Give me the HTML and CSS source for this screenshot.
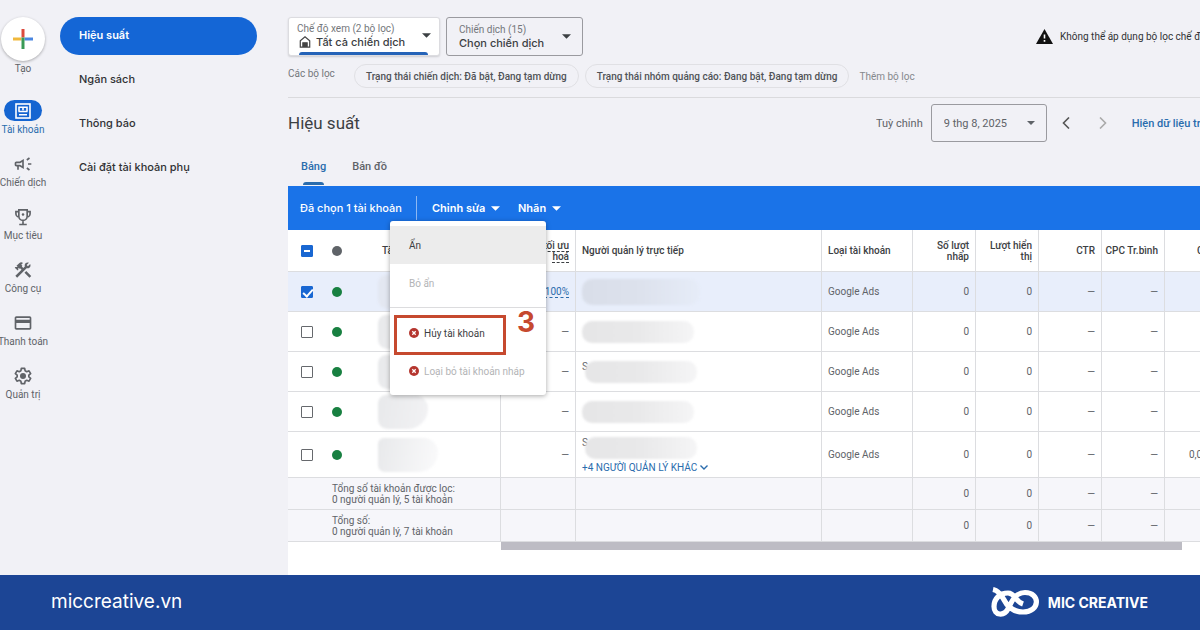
FILE: index.html
```html
<!DOCTYPE html>
<html lang="vi">
<head>
    <meta charset="UTF-8">
    <meta name="viewport" content="width=device-width, initial-scale=1.0">
    <title>Hiệu suất</title>
    <link rel="stylesheet" href="styles.css">
</head>
<body>

<div class="app">
    <nav class="rail">
        <button type="button" class="create">
            <span class="create-circle">
                <svg width="20" height="20" viewBox="0 0 20 20">
                    <path d="M8.500 0h3v8.500h-3z" fill="#dc4a3d"/>
                    <path d="M0 8.500h8.500v3H0z" fill="#f0b83c"/>
                    <path d="M11.500 8.500H20v3h-8.500z" fill="#4a86e0"/>
                    <path d="M8.500 8.500h3V20h-3z" fill="#3a9a56"/>
                </svg>
            </span>
            Tạo
        </button>
        <a href="#" class="rail-item active">
            <span class="rail-icon">
                <svg width="16" height="16" viewBox="0 0 16 16" fill="none" stroke="#fff" stroke-width="1.600">
                    <rect x="1" y="1" width="14" height="14"/>
                    <path d="M4 8.500V4.200h8v4.300M8 4.200v3M3.500 8.500h9M4 11.800h8"/>
                </svg>
            </span>
            Tài khoản
        </a>
        <a href="#" class="rail-item">
            <span class="rail-icon">
                <svg width="20" height="20" viewBox="0 0 24 24" fill="currentColor"><path d="M18 11v2h4v-2h-4zm-2 6.610c.96.710 2.210 1.650 3.200 2.390.4-.53.8-1.070 1.200-1.600-.99-.74-2.240-1.680-3.200-2.400-.4.540-.8 1.080-1.200 1.610zM20.400 5.600c-.4-.53-.8-1.070-1.200-1.600-.99.740-2.240 1.680-3.200 2.400.4.530.8 1.070 1.200 1.600.96-.72 2.210-1.650 3.200-2.400zM4 9c-1.100 0-2 .9-2 2v2c0 1.100.9 2 2 2h1v4h2v-4h1l5 3V6L8 9H4zm5.030 1.710L11 9.530v4.940l-1.970-1.180-.48-.29H4v-2h4.550l.48-.29z"/></svg>
            </span>
            Chiến dịch
        </a>
        <a href="#" class="rail-item">
            <span class="rail-icon">
                <svg width="20" height="20" viewBox="0 0 24 24" fill="none" stroke="currentColor" stroke-width="2">
                    <path d="M7 3.500h10v7.500a5 5 0 0 1-10 0zM7 5.500H3.500V8a4 4 0 0 0 4 4M17 5.500h3.500V8a4 4 0 0 1-4 4M12 16v5M7.500 21h9"/>
                    <circle cx="12" cy="9" r="1.500" fill="currentColor" stroke="none"/>
                </svg>
            </span>
            Mục tiêu
        </a>
        <a href="#" class="rail-item">
            <span class="rail-icon">
                <svg width="20" height="20" viewBox="0 0 24 24" fill="currentColor"><path d="M13.780 15.170l2.120-2.120 6 6-2.120 2.120zM17.500 10c1.930 0 3.500-1.570 3.500-3.500 0-.58-.16-1.120-.41-1.600l-2.700 2.700-1.490-1.490 2.700-2.700c-.48-.25-1.020-.41-1.600-.41C15.570 3 14 4.570 14 6.500c0 .41.080.8.210 1.160l-1.850 1.850-1.780-1.780.71-.71-1.410-1.410L12 3.490c-1.170-1.170-3.070-1.170-4.240 0L4.220 7.030l1.410 1.410H2.810l-.71.710 3.540 3.540.71-.71V9.150l1.410 1.410.71-.71 1.780 1.780-7.410 7.410 2.120 2.120L16.340 9.790c.36.130.75.210 1.160.210z"/></svg>
            </span>
            Công cụ
        </a>
        <a href="#" class="rail-item">
            <span class="rail-icon">
                <svg width="20" height="20" viewBox="0 0 24 24" fill="currentColor"><path d="M20 4H4c-1.110 0-2 .89-2 2v12c0 1.110.89 2 2 2h16c1.110 0 2-.89 2-2V6c0-1.110-.89-2-2-2zm0 14H4v-6h16v6zm0-10H4V6h16v2z"/></svg>
            </span>
            Thanh toán
        </a>
        <a href="#" class="rail-item">
            <span class="rail-icon">
                <svg width="20" height="20" viewBox="0 0 24 24" fill="none" stroke="currentColor" stroke-width="2" stroke-linejoin="round">
                    <path d="M10 2.800h4l.5 2.800 2 1.200 2.700-1 2 3.400-2.200 1.800v2l2.200 1.800-2 3.400-2.700-1-2 1.200-.5 2.800h-4l-.5-2.800-2-1.200-2.700 1-2-3.400L5 13V11L2.800 9.200l2-3.400 2.700 1 2-1.200z"/>
                    <circle cx="12" cy="12" r="3.600" fill="currentColor" stroke="none"/>
                </svg>
            </span>
            Quản trị
        </a>
    </nav>

    <nav class="subnav">
        <a href="#" class="active">Hiệu suất</a>
        <a href="#">Ngân sách</a>
        <a href="#">Thông báo</a>
        <a href="#">Cài đặt tài khoản phụ</a>
    </nav>

    <main class="main">
        <div class="scope">
            <div class="picker picker-view">
                <div class="picker-text">
                    <label for="view">Chế độ xem (2 bộ lọc)</label>
                    <div class="picker-value">
                        <svg width="12" height="12" viewBox="0 0 14 14" fill="none" stroke="#444" stroke-width="1.400">
                            <path d="M1.500 13V5.500L7 1l5.500 4.500V13z"/>
                            <path d="M4.500 12V8h5v4zM6 10h2" fill="#444"/>
                        </svg>
                        <select id="view"><option>Tất cả chiến dịch</option></select>
                    </div>
                </div>
                <svg class="caret" width="9" height="5" viewBox="0 0 10 5"><path d="M0 0h10L5 5z"/></svg>
            </div>
            <div class="picker picker-campaign">
                <div class="picker-text">
                    <label for="campaign">Chiến dịch (15)</label>
                    <div class="picker-value">
                        <select id="campaign"><option>Chọn chiến dịch</option></select>
                    </div>
                </div>
                <svg class="caret" width="9" height="5" viewBox="0 0 10 5"><path d="M0 0h10L5 5z"/></svg>
            </div>
            <div class="alert">
                <svg width="17" height="15" viewBox="0 0 17 15">
                    <path d="M8.500 0L17 15H0z" fill="#111"/>
                    <path d="M7.700 5.500h1.600v4H7.700zM7.700 11h1.600v1.700H7.700z" fill="#fff"/>
                </svg>
                <span>Không thể áp dụng bộ lọc chế độ xem</span>
            </div>
        </div>

        <div class="filters">
            <span class="filters-label">Các bộ lọc</span>
            <button type="button" class="chip">Trạng thái chiến dịch: Đã bật, Đang tạm dừng</button>
            <button type="button" class="chip">Trạng thái nhóm quảng cáo: Đang bật, Đang tạm dừng</button>
            <button type="button" class="add-filter">Thêm bộ lọc</button>
        </div>

        <div class="heading">
            <h1>Hiệu suất</h1>
            <div class="range">
                <label for="date">Tuỳ chỉnh</label>
                <div class="date">
                    <select id="date"><option>9 thg 8, 2025</option></select>
                    <svg class="caret" width="8" height="4" viewBox="0 0 10 5"><path d="M0 0h10L5 5z"/></svg>
                </div>
                <button type="button" class="step" aria-label="Trước">
                    <svg width="8" height="12" viewBox="0 0 8 12" fill="none" stroke="#555" stroke-width="1.600"><path d="M7 0.500L1.500 6 7 11.500"/></svg>
                </button>
                <button type="button" class="step" aria-label="Sau" disabled>
                    <svg width="8" height="12" viewBox="0 0 8 12" fill="none" stroke="#aaa" stroke-width="1.600"><path d="M1 0.500L6.500 6 1 11.500"/></svg>
                </button>
                <a href="#" class="show-data">Hiện dữ liệu trong</a>
            </div>
        </div>

        <div class="tabs">
            <a href="#" class="active">Bảng</a>
            <a href="#">Bản đồ</a>
        </div>

        <section class="panel">
            <div class="toolbar">
                <span class="selected">Đã chọn 1 tài khoản</span>
                <div class="edit">
                    <button type="button">Chỉnh sửa
                        <svg class="caret" width="9" height="5" viewBox="0 0 10 5"><path d="M0 0h10L5 5z"/></svg>
                    </button>
                    <ul class="menu">
                        <li><button type="button" class="hover">Ẩn</button></li>
                        <li><button type="button" disabled>Bỏ ẩn</button></li>
                        <li class="danger">
                            <button type="button">
                                <svg width="10" height="10" viewBox="0 0 10 10"><circle cx="5" cy="5" r="5" fill="#b5362f"/><path d="M3.300 3.300l3.400 3.400M6.700 3.300L3.300 6.700" stroke="#fff" stroke-width="1.300"/></svg>
                                Hủy tài khoản
                            </button>
                            <span class="mark-box"></span>
                            <span class="mark-number">3</span>
                        </li>
                        <li>
                            <button type="button" disabled>
                                <svg width="10" height="10" viewBox="0 0 10 10"><circle cx="5" cy="5" r="5" fill="#b5362f"/><path d="M3.300 3.300l3.400 3.400M6.700 3.300L3.300 6.700" stroke="#fff" stroke-width="1.300"/></svg>
                                Loại bỏ tài khoản nháp
                            </button>
                        </li>
                    </ul>
                </div>
                <button type="button">Nhãn
                    <svg class="caret" width="9" height="5" viewBox="0 0 10 5"><path d="M0 0h10L5 5z"/></svg>
                </button>
            </div>

            <div class="table-wrap">
                <table>
                    <colgroup>
                        <col class="col-check">
                        <col class="col-status">
                        <col class="col-name">
                        <col class="col-score">
                        <col class="col-manager">
                        <col class="col-type">
                        <col class="col-num">
                        <col class="col-num">
                        <col class="col-num">
                        <col class="col-num">
                        <col class="col-cost">
                    </colgroup>
                    <thead>
                        <tr>
                            <th><input type="checkbox" class="some" aria-label="Chọn tất cả"></th>
                            <th><span class="dot dot-grey"></span></th>
                            <th class="line">Tài khoản</th>
                            <th class="line num"><span class="hint">tối ưu<br>hoá</span></th>
                            <th class="line">Người quản lý trực tiếp</th>
                            <th class="line">Loại tài khoản</th>
                            <th class="line num">Số lượt nhấp</th>
                            <th class="line num">Lượt hiển thị</th>
                            <th class="line num">CTR</th>
                            <th class="line num">CPC Tr.bình</th>
                            <th>Chi phí</th>
                        </tr>
                    </thead>
                    <tbody>
                        <tr class="checked">
                            <td><input type="checkbox" aria-label="Chọn tài khoản 1" checked></td>
                            <td><span class="dot"></span></td>
                            <td class="line"><span class="smudge smudge-name"></span></td>
                            <td class="line num"><a href="#" class="hint">100%</a></td>
                            <td class="line"><span class="smudge smudge-blue"></span></td>
                            <td class="line">Google Ads</td>
                            <td class="line num">0</td>
                            <td class="line num">0</td>
                            <td class="line num">—</td>
                            <td class="line num">—</td>
                            <td></td>
                        </tr>
                        <tr>
                            <td><input type="checkbox" aria-label="Chọn tài khoản 2"></td>
                            <td><span class="dot"></span></td>
                            <td class="line"><span class="smudge smudge-name"></span></td>
                            <td class="line num">—</td>
                            <td class="line"><span class="smudge"></span></td>
                            <td class="line">Google Ads</td>
                            <td class="line num">0</td>
                            <td class="line num">0</td>
                            <td class="line num">—</td>
                            <td class="line num">—</td>
                            <td></td>
                        </tr>
                        <tr>
                            <td><input type="checkbox" aria-label="Chọn tài khoản 3"></td>
                            <td><span class="dot"></span></td>
                            <td class="line"><span class="smudge smudge-name"></span></td>
                            <td class="line num">—</td>
                            <td class="line"><div class="masked"><span>S</span><span class="smudge"></span></div></td>
                            <td class="line">Google Ads</td>
                            <td class="line num">0</td>
                            <td class="line num">0</td>
                            <td class="line num">—</td>
                            <td class="line num">—</td>
                            <td></td>
                        </tr>
                        <tr>
                            <td><input type="checkbox" aria-label="Chọn tài khoản 4"></td>
                            <td><span class="dot"></span></td>
                            <td class="line"><span class="smudge smudge-name"></span></td>
                            <td class="line num">—</td>
                            <td class="line"><span class="smudge"></span></td>
                            <td class="line">Google Ads</td>
                            <td class="line num">0</td>
                            <td class="line num">0</td>
                            <td class="line num">—</td>
                            <td class="line num">—</td>
                            <td></td>
                        </tr>
                        <tr class="tall">
                            <td><input type="checkbox" aria-label="Chọn tài khoản 5"></td>
                            <td><span class="dot"></span></td>
                            <td class="line"><span class="smudge smudge-name smudge-wide"></span></td>
                            <td class="line num">—</td>
                            <td class="line">
                                <div class="masked"><span>S</span><span class="smudge"></span></div>
                                <a href="#" class="more">+4 NGƯỜI QUẢN LÝ KHÁC
                                    <svg width="8" height="5" viewBox="0 0 8 5" fill="none" stroke="currentColor" stroke-width="1.400"><path d="M0.500 0.500L4 4l3.500-3.500"/></svg>
                                </a>
                            </td>
                            <td class="line">Google Ads</td>
                            <td class="line num">0</td>
                            <td class="line num">0</td>
                            <td class="line num">—</td>
                            <td class="line num">—</td>
                            <td class="cost">0,00</td>
                        </tr>
                    </tbody>
                    <tfoot>
                        <tr>
                            <td></td>
                            <td colspan="2" class="line total">Tổng số tài khoản được lọc:<br>0 người quản lý, 5 tài khoản</td>
                            <td class="line"></td>
                            <td class="line"></td>
                            <td class="line"></td>
                            <td class="line num">0</td>
                            <td class="line num">0</td>
                            <td class="line num">—</td>
                            <td class="line num">—</td>
                            <td></td>
                        </tr>
                        <tr>
                            <td></td>
                            <td colspan="2" class="line total">Tổng số:<br>0 người quản lý, 7 tài khoản</td>
                            <td class="line"></td>
                            <td class="line"></td>
                            <td class="line"></td>
                            <td class="line num">0</td>
                            <td class="line num">0</td>
                            <td class="line num">—</td>
                            <td class="line num">—</td>
                            <td></td>
                        </tr>
                    </tfoot>
                </table>
            </div>
            <div class="scrollbar"></div>
        </section>
    </main>
</div>

<footer class="footer">
    <a href="#" class="site">miccreative.vn</a>
    <div class="brand">
        <svg width="48" height="31" viewBox="0 0 48 31" fill="none" stroke="#fff" stroke-width="5.200">
            <path d="M2 2.500C7 3.500 10 7.500 12.500 12C16 19 21 25 32 25C49.500 25 49.500 5.500 34 5.500C24 5.500 20.500 15 17.500 21C13 30 3 28.500 3 19.500C3 11.500 9 6 17 6C24.500 6 23.500 14 32 17"/>
        </svg>
        <span>MIC CREATIVE</span>
    </div>
</footer>

</body>
</html>
```
FILE: styles.css
```css
* {
    box-sizing: border-box;
}
body {
    margin: 0;
    min-height: 100vh;
    display: flex;
    flex-direction: column;
    background-color: #f1f1f6;
    color: #3c4043;
    font-family: Roboto, Arial, sans-serif;
    font-size: 10px;
    overflow-x: hidden;
}
a {
    text-decoration: none;
    color: #2a6cad;
}
button, select {
    font: inherit;
    color: inherit;
    background: none;
    border: none;
    padding: 0;
    margin: 0;
}
select {
    appearance: none;
}
svg {
    flex-shrink: 0;
}
.caret {
    fill: currentColor;
}
.app {
    flex: 1;
    display: flex;
}

/* left rail */
.rail {
    width: 46px;
    flex-shrink: 0;
    padding-top: 17px;
    display: flex;
    flex-direction: column;
    align-items: center;
    gap: 16px;
}
.create, .rail-item {
    display: flex;
    flex-direction: column;
    align-items: center;
    white-space: nowrap;
    line-height: 14px;
    color: #606368;
}
.create {
    line-height: 16px;
    margin-bottom: 7px;
}
.create-circle {
    width: 44px;
    height: 44px;
    border-radius: 50%;
    background-color: #fff;
    box-shadow: 0 1px 3px rgba(0, 0, 0, 0.3);
    display: flex;
    align-items: center;
    justify-content: center;
}
.rail-icon {
    width: 38px;
    height: 21px;
    margin-bottom: 2px;
    border-radius: 11px;
    display: flex;
    align-items: center;
    justify-content: center;
}
.rail-item.active {
    color: #2a6cad;
}
.rail-item.active .rail-icon {
    background-color: #1565d1;
}

/* second level nav */
.subnav {
    width: 197px;
    flex-shrink: 0;
    margin: 17px 31px 0 14px;
    display: flex;
    flex-direction: column;
    gap: 6px;
}
.subnav a {
    height: 38px;
    padding: 0 0 2px 19px;
    border-radius: 19px;
    display: flex;
    align-items: center;
    color: #303134;
    font-family: Inter, sans-serif;
    font-size: 11px;
    font-weight: 500;
}
.subnav a.active {
    background-color: #1466d6;
    color: #fff;
    font-weight: 600;
}

.main {
    flex: 1;
    min-width: 0;
    display: flex;
    flex-direction: column;
}

/* scope pickers */
.scope {
    display: flex;
    gap: 6px;
    padding-top: 17px;
}
.picker {
    position: relative;
    height: 39px;
    display: flex;
    align-items: center;
    padding: 0 11px 0 12px;
    border: 1px solid #9a9a9f;
    border-radius: 3px;
    color: #3c4043;
}
.picker-view {
    width: 152px;
    padding: 0 8px 2px;
    background-color: #fff;
    border-color: #dcdce0;
    box-shadow: 0 1px 2px rgba(0, 0, 0, 0.15);
}
.picker-view::after {
    content: "";
    position: absolute;
    left: 10px;
    right: 11px;
    bottom: 0;
    height: 3px;
    border-radius: 3px 3px 0 0;
    background-color: #2563b8;
}
.picker-campaign {
    width: 137px;
    padding-bottom: 1px;
}
.picker-text {
    flex: 1;
    min-width: 0;
}
.picker label {
    display: block;
    line-height: 13px;
    color: #74777b;
}
.picker-value {
    display: flex;
    align-items: center;
    gap: 5px;
    padding-left: 2px;
    line-height: 14px;
    font-family: Inter, sans-serif;
    font-size: 11px;
    font-weight: 500;
}
.picker-campaign .picker-value {
    padding-left: 0;
}
.alert {
    width: 164px;
    margin-left: auto;
    display: flex;
    align-items: center;
    gap: 7px;
    white-space: nowrap;
    overflow: hidden;
    color: #303134;
}

/* filter chips */
.filters {
    display: flex;
    align-items: center;
    padding: 8px 0 9px;
    border-bottom: 1px solid #dadadd;
    white-space: nowrap;
    color: #74777b;
}
.filters-label {
    width: 66px;
    align-self: flex-start;
    line-height: 20px;
}
.chip {
    height: 24px;
    padding: 0 11px;
    margin-right: 6px;
    border: 1px solid #e0e0e4;
    border-radius: 12px;
    color: #505357;
    font-weight: 500;
}
.add-filter {
    margin-left: 4px;
    color: #85888c;
}

.heading {
    height: 50px;
    display: flex;
    align-items: center;
}
h1 {
    margin: 0;
    font-size: 17px;
    font-weight: 400;
    line-height: 24px;
    color: #3c4043;
}
.range {
    width: 324px;
    margin-left: auto;
    display: flex;
    align-items: center;
    overflow: hidden;
    white-space: nowrap;
    font-size: 11px;
    color: #5f6368;
}
.date {
    width: 116px;
    height: 38px;
    flex-shrink: 0;
    margin: 0 10px 0 8px;
    padding: 0 11px 0 12px;
    border: 1px solid #9a9a9f;
    border-radius: 3px;
    display: flex;
    align-items: center;
    justify-content: space-between;
}
.step {
    width: 19px;
    flex-shrink: 0;
    margin-right: 18px;
    line-height: 0;
}
.show-data {
    margin-left: 1px;
    font-weight: 500;
}

.tabs {
    height: 38px;
    display: flex;
    gap: 26px;
    padding-left: 13px;
    font-size: 11px;
    font-weight: 500;
}
.tabs a {
    position: relative;
    line-height: 38px;
    color: #5f6368;
}
.tabs a.active {
    color: #2a6cad;
}
.tabs a.active::after {
    content: "";
    position: absolute;
    left: 2px;
    right: 2px;
    bottom: 1px;
    height: 3px;
    border-radius: 3px 3px 0 0;
    background-color: #2a6cad;
}

/* accounts table */
.panel {
    flex: 1;
    background-color: #fff;
}
.toolbar {
    height: 44px;
    display: flex;
    align-items: center;
    padding-left: 12px;
    background-color: #1a73e8;
    color: #fff;
    font-family: Inter, sans-serif;
    font-size: 11px;
    font-weight: 600;
}
.toolbar > button, .edit > button {
    display: flex;
    align-items: center;
    gap: 6px;
}
.selected {
    width: 117px;
    line-height: 24px;
    border-right: 1px solid #8db8f3;
    font-weight: 500;
    white-space: nowrap;
}
.edit {
    position: relative;
    width: 101px;
    padding-left: 15px;
}
.menu {
    position: absolute;
    z-index: 2;
    top: 20px;
    left: -27px;
    width: 156px;
    margin: 0;
    padding: 5px 0;
    list-style: none;
    background-color: #fff;
    border-radius: 3px;
    box-shadow: 0 1px 5px rgba(0, 0, 0, 0.35);
    color: #3c4043;
    font-family: Roboto, Arial, sans-serif;
    font-size: 10px;
    font-weight: 400;
}
.menu button {
    width: 100%;
    height: 38px;
    padding-left: 19px;
    display: flex;
    align-items: center;
    gap: 5px;
    text-align: left;
    white-space: nowrap;
}
.menu button.hover {
    background-color: #ececec;
}
.menu button:disabled {
    color: #b3b4b6;
}
.menu .danger {
    position: relative;
    margin-top: 5px;
    padding-top: 6px;
    border-top: 1px solid #dcdcde;
}
.mark-box {
    position: absolute;
    top: 7px;
    left: 4px;
    width: 112px;
    height: 40px;
    border: 3px solid #c6492f;
}
.mark-number {
    position: absolute;
    top: -1px;
    left: 127px;
    font-family: Inter, sans-serif;
    font-size: 28px;
    font-weight: 700;
    line-height: 30px;
    color: #c6492f;
}

.table-wrap {
    overflow: hidden;
}
table {
    width: 100%;
    min-width: 967px;
    table-layout: fixed;
    border-collapse: separate;
    border-spacing: 0;
}
.col-check {
    width: 37px;
}
.col-status {
    width: 56px;
}
.col-name {
    width: 120px;
}
.col-score {
    width: 75px;
}
.col-type {
    width: 91px;
}
.col-num {
    width: 63px;
}
.col-cost {
    width: 90px;
}
th, td {
    height: 40px;
    padding: 0 6px;
    text-align: left;
    line-height: 11px;
    border-bottom: 1px solid #dcdde0;
}
th {
    height: 42px;
    font-weight: 500;
}
td {
    color: #606368;
}
.tall td {
    height: 46px;
}
tfoot td {
    height: 32px;
    background-color: #f6f6fa;
}
.line {
    border-right: 1px solid #dcdde0;
}
.num {
    padding-left: 3px;
    text-align: right;
}
th:first-child, td:first-child {
    padding-left: 13px;
}
th:last-child {
    padding-left: 32px;
}
td.cost {
    padding-left: 24px;
}
th:nth-child(3) {
    padding-left: 1px;
}
td.total {
    padding-left: 7px;
}
.checked td {
    background-color: #e8eefb;
}
.hint {
    text-decoration: underline dashed;
    text-underline-offset: 2px;
}
input[type="checkbox"] {
    appearance: none;
    display: block;
    position: relative;
    width: 12px;
    height: 12px;
    margin: 0;
    border: 1px solid #66696d;
    border-radius: 1px;
}
input[type="checkbox"]:checked, input[type="checkbox"].some {
    background-color: #1967d2;
    border-color: #1967d2;
}
input:checked::after {
    content: "";
    position: absolute;
    left: 3px;
    top: 0;
    width: 4px;
    height: 8px;
    border: solid #fff;
    border-width: 0 2px 2px 0;
    transform: rotate(42deg);
}
input.some::after {
    content: "";
    position: absolute;
    left: 2px;
    top: 4px;
    width: 6px;
    height: 2px;
    background-color: #fff;
}
.dot {
    display: block;
    width: 10px;
    height: 10px;
    margin-left: 1px;
    border-radius: 50%;
    background-color: #188041;
}
.dot-grey {
    background-color: #5f6368;
}

/* hidden names */
.masked {
    display: grid;
    justify-items: start;
}
.masked > * {
    grid-area: 1 / 1;
}
.masked .smudge {
    margin-left: 3px;
}
.smudge {
    display: block;
    width: 112px;
    height: 22px;
    border-radius: 10px;
    background: linear-gradient(90deg, #e6e6e7, #e9e9ea 50%, #f5f5f6);
    filter: blur(1px);
}
.smudge-blue {
    width: 118px;
    height: 26px;
    background: linear-gradient(90deg, #d9dee9, #dde2ed 50%, #e6ecf8);
}
.smudge-name {
    width: 50px;
    height: 34px;
    margin-left: -9px;
    border-radius: 12px 20px 30px 14px;
    background: linear-gradient(100deg, #e8e9eb, #f2f2f4);
}
.checked .smudge-name {
    background: #e3e7f1;
}
.smudge-wide {
    width: 60px;
    border-radius: 12px 30px 40px 14px;
    background: linear-gradient(100deg, #e8e9eb, #fafafb);
}
.more {
    display: flex;
    align-items: center;
    gap: 3px;
    padding-top: 3px;
    white-space: nowrap;
}
.scrollbar {
    height: 8px;
    margin: 0 18px 0 213px;
    background-color: #bdbcc4;
}

.footer {
    height: 55px;
    display: flex;
    align-items: center;
    justify-content: space-between;
    padding: 0 52px 0 51px;
    background-color: #1c4595;
    color: #fff;
}
.site {
    color: #fff;
    font-family: Inter, sans-serif;
    font-size: 19px;
    line-height: 24px;
    padding-bottom: 2px;
}
.brand {
    display: flex;
    align-items: center;
    gap: 9px;
    font-family: Inter, sans-serif;
    font-size: 14px;
    font-weight: 700;
}
```
